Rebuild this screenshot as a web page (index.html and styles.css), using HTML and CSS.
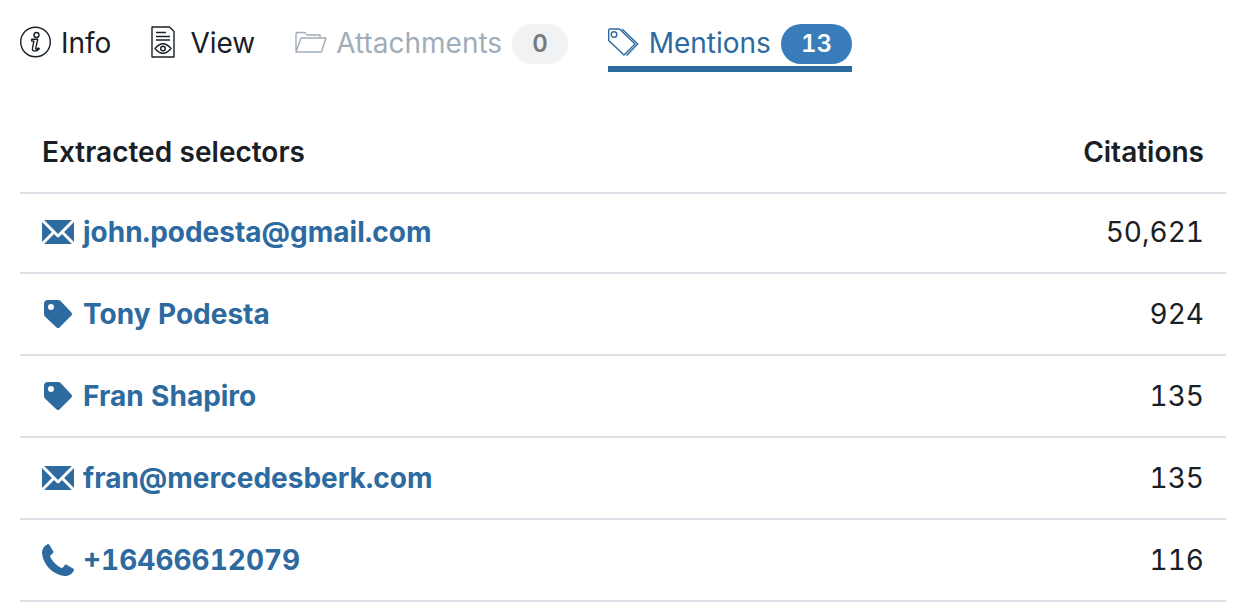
FILE: index.html
```
<!DOCTYPE html>
<html lang="en">
<head>
    <meta charset="UTF-8">
    <meta name="viewport" content="width=device-width, initial-scale=1.0">
    <title>Mentions</title>
    <link rel="stylesheet" href="styles.css">
</head>
<body>
    <!-- Shared icons for the selector rows -->
    <svg class="icon-defs" aria-hidden="true">
        <symbol id="icon-mail" viewBox="0 0 16 16">
            <path d="M0 3.06v9.88L4.94 8zM14.94 2H1.06L8 8.94zm-6.41 8.53c-.14.14-.32.22-.53.22s-.39-.08-.53-.22L6 9.06 1.06 14h13.88L10 9.06zM11.06 8 16 12.94V3.06z"/>
        </symbol>
        <symbol id="icon-tag" viewBox="0 0 16 16">
            <path fill-rule="evenodd" d="M1 3a2 2 0 0 1 2-2h5c.55 0 1.05.22 1.41.59l5.3 5.71a1 1 0 0 1 0 1.41l-6 6a1 1 0 0 1-1.41 0L1.59 9.41A2 2 0 0 1 1 8zm5 1.5a1.5 1.5 0 1 0-3 0 1.5 1.5 0 0 0 3 0z"/>
        </symbol>
        <symbol id="icon-phone" viewBox="0 0 16 16">
            <path d="M15.9 13.22c-.8 1.9-2.7 2.78-4.6 2.78C5.5 15.3.7 10.5.02 4.7-.08 2.8.9.9 2.7.08c.3-.12.7-.1.9.2l2 3.4c.2.3.1.7-.1.9-.5.5-1.5 1-1.5 1.5.9 2.4 3.5 5 5.9 5.9.6 0 1-1 1.5-1.5.2-.2.6-.3.9-.1l3.4 2c.3.1.4.5.2.84z"/>
        </symbol>
    </svg>

    <nav class="tabs">
        <button type="button" class="tab">
            <svg class="tab-icon" viewBox="0 0 32 32">
                <circle cx="15.5" cy="16" r="14.8"/>
                <circle cx="16.5" cy="9" r="2.5"/>
                <path d="M11.7 13.3h6l-2 9c-.2 1.2 1 1.2 2.6-.4l1 .9c-1.6 1.8-2.9 2.3-4.4 2.3-2 0-2.8-1.2-2.4-3.2l1.4-6.8h-2.2z"/>
            </svg>
            <span class="tab-label">Info</span>
        </button>
        <button type="button" class="tab">
            <svg class="tab-icon tab-icon-file" viewBox="0 0 24 32">
                <path d="M1 1h17.5L23 5.5V31H1z"/>
                <path d="M5 6.5h10M5 10.5h14M5 14h14"/>
                <path d="M4 22.5q8-9.6 16 0-8 9.6-16 0z"/>
                <circle cx="12" cy="22.5" r="2.3"/>
            </svg>
            <span class="tab-label">View</span>
        </button>
        <button type="button" class="tab" disabled>
            <svg class="tab-icon" viewBox="0 0 32 32">
                <path d="M1 26V8c0-1 .5-1.5 1.5-1.5h7c1.5 0 1.5 2.5 3 2.500H25v3M1 26l5-14h25l-4.500 14z"/>
            </svg>
            <span class="tab-label">Attachments</span>
            <span class="badge">0</span>
        </button>
        <button type="button" class="tab tab-active">
            <svg class="tab-icon" viewBox="0 0 32 32">
                <path d="M2 3h9.5L27 18 16 29 .7 14.5v-10Q.7 3 2 3z"/>
                <path d="M14 3l15.700 15-11.200 11.500"/>
                <circle cx="6" cy="8.5" r="2.8"/>
            </svg>
            <span class="tab-label">Mentions</span>
            <span class="badge badge-primary">13</span>
        </button>
    </nav>

    <table class="selectors">
        <thead>
            <tr>
                <th scope="col">Extracted selectors</th>
                <th scope="col" class="numeric">Citations</th>
            </tr>
        </thead>
        <tbody>
            <tr>
                <td><a href="#"><svg class="row-icon"><use href="#icon-mail"/></svg>john.podesta@gmail.com</a></td>
                <td class="numeric">50,621</td>
            </tr>
            <tr>
                <td><a href="#"><svg class="row-icon"><use href="#icon-tag"/></svg>Tony Podesta</a></td>
                <td class="numeric">924</td>
            </tr>
            <tr>
                <td><a href="#"><svg class="row-icon"><use href="#icon-tag"/></svg>Fran Shapiro</a></td>
                <td class="numeric">135</td>
            </tr>
            <tr>
                <td><a href="#"><svg class="row-icon"><use href="#icon-mail"/></svg>fran@mercedesberk.com</a></td>
                <td class="numeric">135</td>
            </tr>
            <tr>
                <td><a href="#"><svg class="row-icon"><use href="#icon-phone"/></svg>+16466612079</a></td>
                <td class="numeric">116</td>
            </tr>
        </tbody>
    </table>
</body>
</html>
```
FILE: styles.css
```
* {
    margin: 0;
    padding: 0;
    box-sizing: border-box;
}

body {
    background: #ffffff;
    color: #182026;
    font-family: 'Inter', sans-serif;
    font-size: 28px;
    font-variant-numeric: tabular-nums;
    line-height: 36px;
    padding: 24px 18px 0 20px;
}

.icon-defs {
    display: none;
}

.tabs {
    display: flex;
    gap: 40px;
}

.tab {
    display: flex;
    align-items: center;
    height: 48px;
    padding-bottom: 2px;
    border: none;
    border-bottom: 6px solid transparent;
    background: none;
    color: inherit;
    font: inherit;
    font-variant-numeric: tabular-nums;
    cursor: pointer;
}

.tab:disabled {
    color: #a1adb8;
    cursor: default;
}

.tab-active {
    color: #2d6a9f;
    border-bottom-color: #2d6a9f;
}

.tab-label {
    padding-bottom: 2px;
}

.tab-icon {
    width: 32px;
    height: 32px;
    margin-right: 9px;
    margin-bottom: 4px;
    fill: none;
    stroke: currentColor;
    stroke-width: 1.4;
    stroke-linejoin: round;
}

.tab-icon-file {
    width: 24px;
    margin-right: 15px;
}

.badge {
    margin-left: 10px;
    padding: 0 20px;
    border-radius: 20px;
    background: #f1f2f4;
    color: #77797c;
    font-size: 24px;
    font-weight: 600;
    line-height: 40px;
}

.badge-primary {
    background: #387dba;
    color: #ffffff;
}

.selectors {
    width: 100%;
    margin-top: 40px;
    border-collapse: collapse;
}

.selectors th,
.selectors td {
    padding: 22px;
    border-bottom: 2px solid #dbe1e6;
    text-align: left;
}

.selectors th {
    font-weight: 600;
}

.selectors tbody tr:first-child td {
    padding-top: 20px;
}

.selectors .numeric {
    text-align: right;
}

.selectors a {
    display: flex;
    align-items: center;
    gap: 9px;
    color: #2d6a9f;
    font-weight: 700;
    text-decoration: none;
}

.row-icon {
    width: 32px;
    height: 32px;
    fill: currentColor;
}
```
